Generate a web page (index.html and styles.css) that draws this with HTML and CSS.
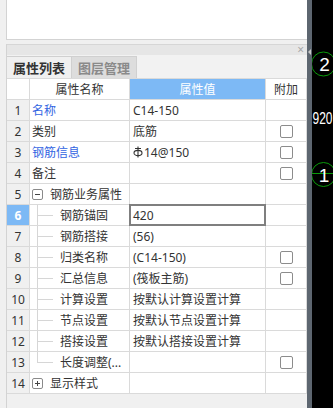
FILE: index.html
```html
<!DOCTYPE html>
<html>
<head>
<meta charset="utf-8">
<link rel="stylesheet" href="styles.css">
</head>
<body>
<div class="app">
  <div class="side">
    <div class="topbox"></div>
    <div class="panel">
      <div class="phead"><span class="close">×</span></div>
      <div class="tabs">
        <div class="tab active">属性列表</div>
        <div class="tab inactive">图层管理</div>
      </div>
      <div class="grid">
        <div class="c hnum"></div>
        <div class="c hcell">属性名称</div>
        <div class="c hcell hval">属性值</div>
        <div class="c hcell">附加</div>

        <div class="c num">1</div>
        <div class="c name link">名称</div>
        <div class="c val">C14-150</div>
        <div class="c att"></div>

        <div class="c num">2</div>
        <div class="c name">类别</div>
        <div class="c val">底筋</div>
        <div class="c att"><span class="cb"></span></div>

        <div class="c num">3</div>
        <div class="c name link">钢筋信息</div>
        <div class="c val"><svg class="sym" width="10" height="12" viewBox="0 0 10 12"><path d="M5 0.5V11.5M2 2.5H8" stroke="#333" stroke-width="1.1" fill="none"/><ellipse cx="5" cy="7" rx="4" ry="2.6" stroke="#333" stroke-width="1.1" fill="none"/></svg>14@150</div>
        <div class="c att"><span class="cb"></span></div>

        <div class="c num">4</div>
        <div class="c name">备注</div>
        <div class="c val"></div>
        <div class="c att"><span class="cb"></span></div>

        <div class="c num">5</div>
        <div class="c name"><span class="exp minus"></span>钢筋业务属性</div>
        <div class="c val"></div>
        <div class="c att"></div>

        <div class="c num sel">6</div>
        <div class="c name"><span class="tree"></span>钢筋锚固</div>
        <div class="c val edit">420</div>
        <div class="c att"></div>

        <div class="c num">7</div>
        <div class="c name"><span class="tree"></span>钢筋搭接</div>
        <div class="c val">(56)</div>
        <div class="c att"></div>

        <div class="c num">8</div>
        <div class="c name"><span class="tree"></span>归类名称</div>
        <div class="c val">(C14-150)</div>
        <div class="c att"><span class="cb"></span></div>

        <div class="c num">9</div>
        <div class="c name"><span class="tree"></span>汇总信息</div>
        <div class="c val">(筏板主筋)</div>
        <div class="c att"><span class="cb"></span></div>

        <div class="c num">10</div>
        <div class="c name"><span class="tree"></span>计算设置</div>
        <div class="c val">按默认计算设置计算</div>
        <div class="c att"></div>

        <div class="c num">11</div>
        <div class="c name"><span class="tree"></span>节点设置</div>
        <div class="c val">按默认节点设置计算</div>
        <div class="c att"></div>

        <div class="c num">12</div>
        <div class="c name"><span class="tree"></span>搭接设置</div>
        <div class="c val">按默认搭接设置计算</div>
        <div class="c att"></div>

        <div class="c num">13</div>
        <div class="c name"><span class="tree last"></span>长度调整(...</div>
        <div class="c val"></div>
        <div class="c att"><span class="cb"></span></div>

        <div class="c num">14</div>
        <div class="c name"><span class="exp plus"></span>显示样式</div>
        <div class="c val"></div>
        <div class="c att"></div>
      </div>
    </div>
  </div>
  <div class="splitter"><span class="arrow"></span></div>
  <div class="canvas">
    <svg width="21" height="408" viewBox="0 0 21 408">
      <circle cx="11.5" cy="64" r="12" stroke="#0a9a0a" stroke-width="1" fill="none"/>
      <text x="12.5" y="71" class="cnum" text-anchor="middle">2</text>
      <text x="0.5" y="124" class="ctext" textLength="20" lengthAdjust="spacingAndGlyphs">920</text>
      <line x1="0" y1="173.5" x2="21" y2="173.5" stroke="#0a9a0a" stroke-width="1"/>
      <circle cx="11.5" cy="174.5" r="12" stroke="#0a9a0a" stroke-width="1" fill="none"/>
      <text x="12" y="181.5" class="cnum" text-anchor="middle">1</text>
    </svg>
  </div>
</div>
</body>
</html>
```
FILE: styles.css
```css
* { box-sizing: border-box; margin: 0; padding: 0; }
html, body { width: 333px; height: 408px; overflow: hidden; }
body {
  font-family: "Noto Sans", "Noto Sans CJK SC", sans-serif;
  font-size: 12px;
  color: #333;
  background: #000;
}
.app { display: flex; height: 408px; }
.side {
  width: 307px;
  flex: none;
  background: #f0f0f0;
  padding-left: 6px;
  display: flex;
  flex-direction: column;
}
.topbox {
  height: 40px;
  flex: none;
  background: #fff;
  border-left: 1px solid #d3d3d3;
  border-bottom: 1px solid #d3d3d3;
}
.panel {
  margin-top: 4px;
  flex: 1;
  border-left: 1px solid #d3d3d3;
  display: flex;
  flex-direction: column;
}
.phead {
  height: 11px;
  flex: none;
  background: #e6e6e6;
  border-top: 1px solid #d6d6d6;
  position: relative;
}
.close {
  position: absolute;
  right: 3px;
  top: -2px;
  font-size: 12px;
  line-height: 14px;
  color: #a8a8a8;
}
.tabs {
  height: 23px;
  flex: none;
  display: flex;
  align-items: flex-end;
  background: #f2f2f2;
}
.tab {
  height: 22px;
  width: 65px;
  border: 1px solid #d0d0d0;
  border-bottom: none;
  display: flex;
  align-items: center;
  justify-content: center;
  font-weight: bold;
  font-size: 13px;
}
.tab.active { background: #f0f0f0; color: #333; border-left: none; }
.tab.inactive { background: #dddddd; color: #8a8a8a; border-left: none; }
.grid {
  display: grid;
  grid-template-columns: 23px 100px 136px 41px;
  grid-auto-rows: 21px;
  background: #fff;
  border-top: 1px solid #dadada;
}
.c {
  border-right: 1px solid #dadada;
  border-bottom: 1px solid #dadada;
  display: flex;
  align-items: center;
  white-space: nowrap;
  overflow: hidden;
  position: relative;
}
.hnum { background: #fff; }
.hcell { justify-content: center; }
.hval { background: #7db9f5; color: #fff; }
.num { justify-content: center; background: #f0f0f0; }
.num.sel { background: #7db9f5; color: #fff; font-weight: bold; }
.name { padding-left: 2px; }
.link { color: #3265e2; }
.val { padding-left: 3px; overflow: visible; }
.att { justify-content: center; }
.edit::after {
  content: "";
  position: absolute;
  top: -1px;
  left: -1px;
  right: -1px;
  bottom: -1px;
  border: 2px solid #7f7f7f;
}
.sym { margin-right: 1px; }
.cb {
  width: 13px;
  height: 13px;
  border: 1px solid #8c8c8c;
  border-radius: 2px;
  background: #fff;
}
.exp {
  width: 11px;
  height: 11px;
  flex: none;
  border: 1px solid #8a8a8a;
  border-radius: 2px;
  margin-right: 7px;
  position: relative;
}
.exp::before {
  content: "";
  position: absolute;
  left: 2px;
  right: 2px;
  top: 4px;
  height: 1px;
  background: #444;
}
.exp.plus::after {
  content: "";
  position: absolute;
  top: 2px;
  bottom: 2px;
  left: 4px;
  width: 1px;
  background: #444;
}
.tree {
  width: 28px;
  flex: none;
  align-self: stretch;
  position: relative;
}
.tree::before {
  content: "";
  position: absolute;
  left: 5px;
  top: 0;
  bottom: -1px;
  width: 1px;
  background: #d6d6d6;
}
.tree.last::before { bottom: 50%; }
.tree::after {
  content: "";
  position: absolute;
  left: 5px;
  width: 16px;
  top: 50%;
  height: 1px;
  background: #d6d6d6;
}
.splitter {
  width: 5px;
  flex: none;
  background: #5d6670;
  position: relative;
}
.arrow {
  position: absolute;
  left: 1px;
  top: 49px;
  width: 0;
  height: 0;
  border-top: 3px solid transparent;
  border-bottom: 3px solid transparent;
  border-right: 3px solid #c8c8c8;
}
.canvas {
  flex: 1;
  background: #000;
  overflow: hidden;
}
.canvas svg { display: block; }
.cnum {
  font-family: "Liberation Sans", sans-serif;
  font-size: 19px;
  fill: #fff;
}
.ctext {
  font-family: "Liberation Sans", sans-serif;
  font-size: 17px;
  fill: #fff;
}
```
